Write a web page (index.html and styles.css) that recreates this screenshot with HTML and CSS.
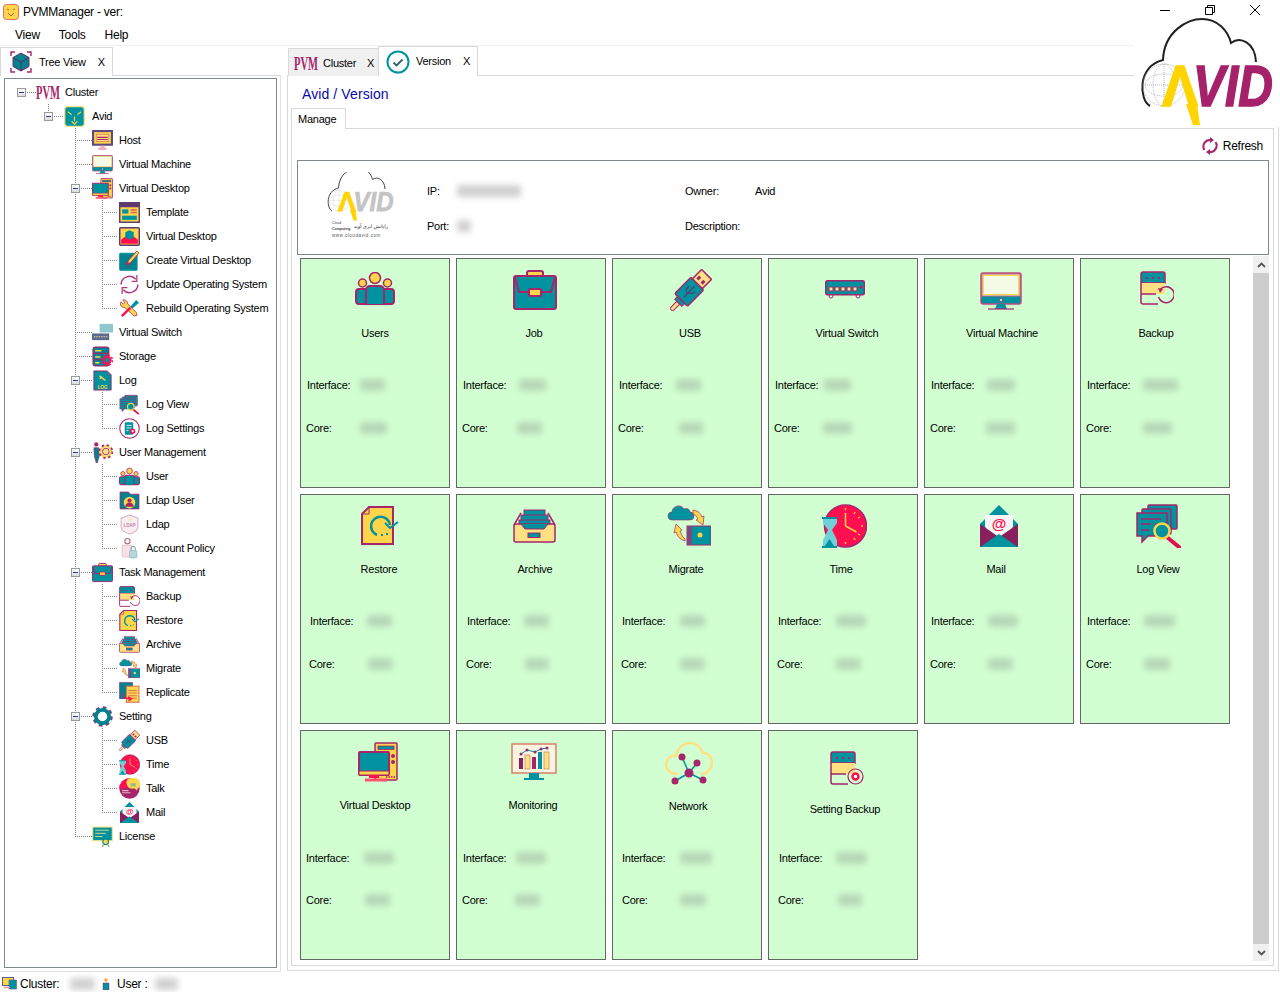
FILE: index.html
```html
<!DOCTYPE html>
<html lang="en">
<head>
<meta charset="utf-8">
<title>PVMManager</title>
<link rel="stylesheet" href="styles.css">
</head>
<body>
<svg class="defs" width="0" height="0" aria-hidden="true">
<defs>
<symbol id="i-pvm" viewBox="0 0 24 14"><text x="0" y="13.5" class="pvmt" font-size="18" textLength="24" lengthAdjust="spacingAndGlyphs">PVM</text></symbol>
<symbol id="i-app" viewBox="0 0 16 16"><rect x=".5" y=".5" width="15" height="15" rx="3" fill="#ffd54a" stroke="#e0705a"/><path d="M4 5l2 1M12 5l-2 1M5 9l3 3 3-3" stroke="#c0504a" fill="none"/></symbol>
<symbol id="i-cube" viewBox="0 0 22 22"><path d="M1 5V1h4M17 1h4v4M21 17v4h-4M5 21H1v-4" fill="none" stroke="#a5266b" stroke-width="1.4"/><path d="M11 2l8 4.500v9L11 20l-8-4.500v-9z" fill="#00838f" stroke="#7a2a6b"/><path d="M3 6.500l8 4.500 8-4.500M11 11v9" fill="none" stroke="#5d2a68"/></symbol>
<symbol id="i-cat" viewBox="0 0 22 22"><rect x=".7" y=".7" width="20.600" height="20.600" rx="3" fill="#00929e" stroke="#ffe082" stroke-width="1.400"/><path d="M4 6l4 3M18 6l-4 3M8 16l3 3 3-3M11 11v5" stroke="#ffd54a" stroke-width="1.200" fill="none"/></symbol>
<symbol id="i-host" viewBox="0 0 20 20"><rect x="1" y="1" width="18" height="13" fill="#ffd54a" stroke="#5d4a80" stroke-width="2"/><rect x="4" y="4" width="12" height="7" fill="#ffe082" stroke="#d9705a" stroke-width=".7"/><path d="M5 7h10M5 9h10" stroke="#a5266b" stroke-width="1"/><path d="M8 15h4v2h2v2H6v-2h2z" fill="#f0b0c0"/></symbol>
<symbol id="i-users" viewBox="0 0 40 33"><rect x="1" y="17" width="38" height="15" rx="3" fill="#00929e" stroke="#a5266b" stroke-width="2"/><path d="M11 32V18a4 4 0 0 1 4-4h10a4 4 0 0 1 4 4v14" fill="#00929e" stroke="#a5266b" stroke-width="2"/><circle cx="20" cy="6" r="5.500" fill="#ffd54a" stroke="#a5266b" stroke-width="1.500"/><circle cx="7.500" cy="11" r="4" fill="#ffd54a" stroke="#a5266b" stroke-width="1.500"/><circle cx="32.500" cy="11" r="4" fill="#ffd54a" stroke="#a5266b" stroke-width="1.500"/></symbol>
<symbol id="i-job" viewBox="0 0 44 40"><rect x="14" y="1" width="16" height="6" rx="2" fill="#ffd54a" stroke="#a5266b" stroke-width="2"/><rect x="1" y="6" width="42" height="33" rx="2" fill="#00929e" stroke="#a5266b" stroke-width="2"/><path d="M2 7l4 15h32l4-15" fill="none" stroke="#a5266b" stroke-width="2"/><rect x="16" y="19" width="12" height="7" rx="1" fill="#ffd54a" stroke="#a5266b" stroke-width="2"/></symbol>
<symbol id="i-usb" viewBox="0 0 42 42"><g transform="rotate(-45 21 21)"><rect x="-7" y="19" width="10" height="4" fill="#ffe082" stroke="#a5266b"/><rect x="3" y="16" width="4" height="10" fill="#00929e" stroke="#a5266b"/><rect x="7" y="12" width="23" height="18" rx="1.500" fill="#00929e" stroke="#a5266b" stroke-width="1.500"/><rect x="30" y="14" width="13" height="14" fill="#ffe082" stroke="#a5266b" stroke-width="1.500"/><rect x="33" y="16.500" width="4" height="3" fill="#a5266b"/><rect x="33" y="22.500" width="4" height="3" fill="#a5266b"/><path d="M11 21h15M15 21l3-4h4M17 21l3 4h3" fill="none" stroke="#6d2a6b"/></g></symbol>
<symbol id="i-vswitch" viewBox="0 0 40 19"><circle cx="6" cy="16" r="2" fill="#fff" stroke="#a5266b"/><circle cx="33" cy="16" r="2" fill="#fff" stroke="#a5266b"/><rect x=".7" y=".7" width="38.600" height="14" rx="1.500" fill="#00929e" stroke="#a5266b" stroke-width="1.400"/><path d="M4 7h4v4H4zM10 7h4v4h-4zM16 7h4v4h-4zM22 7h4v4h-4zM28 7h4v4h-4z" fill="#ffe082" stroke="#a5266b"/><circle cx="36" cy="7" r="1.500" fill="#e01050"/></symbol>
<symbol id="i-vm" viewBox="0 0 42 38"><rect x="1" y="1" width="40" height="31" rx="2" fill="#00929e" stroke="#c04a80" stroke-width="1.500"/><rect x="2" y="2" width="38" height="22" fill="#d1ffd1" stroke="#d9607a"/><rect x="3.500" y="3.500" width="35" height="19" fill="#f3fbe6" stroke="#ffd54a"/><circle cx="21" cy="28" r="1.500" fill="#f3f8df" stroke="#a5266b" stroke-width=".7"/><path d="M17 32h8l2 5H15z" fill="#00929e"/><path d="M8 37h26" stroke="#a5266b" stroke-width="1.200"/></symbol>
<symbol id="i-backup" viewBox="0 0 34 34"><path d="M3 1h20a2 2 0 0 1 2 2v9H1V3a2 2 0 0 1 2-2z" fill="#00929e" stroke="#a5266b" stroke-width="1.500"/><path d="M1 12h24v11H1z" fill="#ffe082"/><path d="M1 12v19a2 2 0 0 0 2 2h15M1 23h15" fill="none" stroke="#a5266b" stroke-width="1.500"/><path d="M6 7h2M12 7h2M18 7h2" stroke="#a5266b" stroke-width="2"/><path d="M20.500 18a8 8 0 1 1-2 8" fill="none" stroke="#a5266b" stroke-width="1.500"/><path d="M18 17l5 1-3 4z" fill="#a5266b"/></symbol>
<symbol id="i-restore" viewBox="0 0 38 39"><path d="M8 1h24v37H1V8z" fill="#ffd54a" stroke="#a5266b" stroke-width="2"/><path d="M1 8h7V1" fill="none" stroke="#a5266b" stroke-width="1"/><path d="M29 19a9.500 9.500 0 1 0-13 10" fill="none" stroke="#00929e" stroke-width="2.500"/><path d="M24 17l5 5 8-6" fill="none" stroke="#00929e" stroke-width="2"/><path d="M20 29h2M25 28h2" stroke="#00929e" stroke-width="2"/></symbol>
<symbol id="i-archive" viewBox="0 0 43 34"><rect x="11" y="1" width="21" height="6" fill="#00929e" stroke="#a5266b"/><rect x="8" y="6" width="27" height="6" fill="#00929e" stroke="#a5266b"/><rect x="6" y="11" width="31" height="8" fill="#00929e" stroke="#a5266b"/><path d="M1 16L8 4M42 16L35 4" stroke="#a5266b" stroke-width="1.500"/><path d="M3 15h37a2 2 0 0 1 2 2v14a2 2 0 0 1-2 2H3a2 2 0 0 1-2-2V17a2 2 0 0 1 2-2z" fill="#ffe082" stroke="#a5266b" stroke-width="1.500"/><path d="M8 15l4 5h19l4-5" fill="#00929e" stroke="#a5266b"/><rect x="15" y="24" width="12" height="4.500" fill="#00929e" stroke="#a5266b"/></symbol>
<symbol id="i-migrate" viewBox="0 0 44 41"><path d="M5 15a4 4 0 0 1 0-8 6.500 6.500 0 0 1 12-3 4 4 0 0 1 6 3 4 4 0 0 1 0 8z" fill="#00929e" stroke="#a5266b" stroke-width=".6"/><path d="M26 5q7 1 9 7l2-1-1 9-7-5 2-1q-1-4-5-5z" fill="#ffd54a" stroke="#a5266b" stroke-width=".7"/><path d="M18 36q-7-2-9-9l-2 1 2-9 6 6-2 1q2 6 5 8z" fill="#ffd54a" stroke="#a5266b" stroke-width=".7"/><rect x="20" y="21" width="24" height="19" fill="#00929e" stroke="#a5266b" stroke-width="1"/><rect x="20" y="21" width="5" height="19" fill="#7a4a80"/><circle cx="33" cy="30" r="2.500" fill="#ffd54a"/></symbol>
<symbol id="i-time" viewBox="0 0 45 44"><circle cx="23.500" cy="22" r="21" fill="#ff0f50" stroke="#a5266b" stroke-width="1.500"/><path d="M23.500 22V9M23.500 22l11 6" stroke="#ffd54a" stroke-width="1.500"/><path d="M23.500 4v2M23.500 38v2M41 22h-2M33 8l-1 2M38 13l-2 1M38 31l-2-1M33 36l-1-2" stroke="#ffd54a" stroke-width="1.300"/><path d="M1 14h14v5l-5 7 5 10v7H1v-7l5-10-5-7z" fill="#70d0d8"/><path d="M0 14h15M0 43h15" stroke="#00929e" stroke-width="2"/><path d="M3 42l4.500-7 4.500 7z" fill="#00929e"/></symbol>
<symbol id="i-mail" viewBox="0 0 38 42"><path d="M19 0l19 19v4H0v-4z" fill="#00929e"/><path d="M0 19l19 13 19-13v23H0z" fill="#8a1f5e"/><path d="M5 10h28v12L19 32 5 22z" fill="#f5f5f5"/><path d="M0 42l19-13 19 13z" fill="#00929e"/><text x="19" y="24" class="at" font-size="15">@</text></symbol>
<symbol id="i-logview" viewBox="0 0 48 44"><rect x="13" y="1" width="29" height="24" rx="1" fill="#00929e" stroke="#a5266b" stroke-width="1.500"/><rect x="7" y="5" width="29" height="25" rx="1" fill="#00929e" stroke="#a5266b" stroke-width="1.500"/><path d="M2 9h30v23H13l-6 6v-6H2z" fill="#00929e" stroke="#a5266b" stroke-width="1.500"/><path d="M6 15h20M6 20h10M6 26h8M20 20h6" stroke="#a5266b" stroke-width="1.500"/><path d="M33 34l11 9" stroke="#e01050" stroke-width="4" stroke-linecap="round"/><circle cx="27" cy="27" r="7.500" fill="#00929e" stroke="#ffd54a" stroke-width="2.500"/></symbol>
<symbol id="i-vdesk" viewBox="0 0 40 40"><rect x="17" y="1" width="22" height="37" rx="1" fill="#ffd54a" stroke="#a5266b" stroke-width="1.500"/><rect x="20" y="4" width="16" height="3.500" fill="#00929e" stroke="#a5266b" stroke-width=".8"/><circle cx="35" cy="14" r="2" fill="#a5266b"/><circle cx="35" cy="20" r="2" fill="#a5266b"/><rect x="1" y="10" width="30" height="23" rx="1" fill="#00929e" stroke="#a5266b" stroke-width="2"/><path d="M1 29h30v4H1z" fill="#ffd54a" stroke="#a5266b"/><rect x="11" y="33" width="10" height="3" fill="#ff0f50"/><path d="M7 38h22" stroke="#ff5070" stroke-width="3"/><path d="M28 35h9" stroke="#a5266b" stroke-width="1.500" stroke-dasharray="1.500 1"/></symbol>
<symbol id="i-monitor" viewBox="0 0 46 37"><rect x="1" y="1" width="44" height="29" fill="#f7f5df" stroke="#d9806a" stroke-width="1.500"/><rect x="8" y="15" width="4" height="11" fill="#8a1f5e"/><rect x="14" y="12" width="5" height="14" fill="#ffe082" stroke="#c07060" stroke-width=".6"/><rect x="21" y="14" width="4" height="12" fill="#a5266b"/><rect x="27" y="9" width="4" height="17" fill="#00929e"/><rect x="33" y="9" width="5" height="17" fill="#ffe082" stroke="#c07060" stroke-width=".6"/><path d="M10 11l6-4 8 2 6-3 6-1" fill="none" stroke="#00929e"/><circle cx="10" cy="11" r="1.500" fill="#a5266b"/><circle cx="16" cy="7" r="1.500" fill="#a5266b"/><circle cx="24" cy="9" r="1.500" fill="#a5266b"/><circle cx="30" cy="6" r="1.500" fill="#a5266b"/><circle cx="36" cy="5" r="1.500" fill="#a5266b"/><path d="M18 30h10v5H18z" fill="#00929e"/><path d="M13 36h20" stroke="#00929e" stroke-width="2"/></symbol>
<symbol id="i-network" viewBox="0 0 48 45"><path d="M13 33C4 33-1 27 2 20c1-4 5-6 9-5 1-7 7-13 14-13 6 0 11 4 13 10 6 0 9 5 9 10 0 6-5 11-11 11" fill="none" stroke="#ffe082" stroke-width="2.500"/><path d="M17 16l7 16M32 22l-8 10M10 40l14-8M38 39l-14-7" stroke="#00929e" stroke-width="1.500"/><g fill="#a5266b"><circle cx="17" cy="16" r="3.500"/><circle cx="32" cy="22" r="3.500"/><circle cx="24" cy="32" r="4.500"/><circle cx="10" cy="40" r="3.500"/><circle cx="38" cy="39" r="3.500"/></g></symbol>
<symbol id="i-setbackup" viewBox="0 0 34 34"><path d="M3 1h20a2 2 0 0 1 2 2v9H1V3a2 2 0 0 1 2-2z" fill="#00929e" stroke="#a5266b" stroke-width="1.500"/><path d="M1 12h24v11H1z" fill="#ffe082"/><path d="M1 12v19a2 2 0 0 0 2 2h15M1 23h15" fill="none" stroke="#a5266b" stroke-width="1.500"/><path d="M6 7h2M12 7h2M18 7h2" stroke="#a5266b" stroke-width="2"/><circle cx="25.500" cy="25.500" r="7.500" fill="none" stroke="#a5266b" stroke-width="1.200"/><circle cx="25.500" cy="25.500" r="3" fill="#fff" stroke="#ff0f50" stroke-width="2.500"/></symbol>
<symbol id="i-template" viewBox="0 0 20 20"><rect x=".7" y=".7" width="18.600" height="18.600" fill="#ffd54a" stroke="#5d3a70" stroke-width="1.400"/><rect x="1" y="1" width="18" height="4" fill="#5d3a70"/><rect x="3" y="7" width="6" height="4" fill="#00929e"/><path d="M11 7.500h6M11 10h6" stroke="#d9705a" stroke-width="1.500"/><rect x="3" y="13" width="14" height="4" fill="#00929e"/></symbol>
<symbol id="i-vdtile" viewBox="0 0 20 18"><rect x=".7" y=".7" width="18.600" height="16.600" rx="1" fill="#ffd54a" stroke="#5d3a70" stroke-width="1.400"/><path d="M2 16v-4l4-3h8l4 3v4z" fill="#ff0f50"/><path d="M10 3l4 2v5l-4 2-4-2V5z" fill="#00929e"/></symbol>
<symbol id="i-create" viewBox="0 0 20 20"><rect x=".7" y="3" width="16.500" height="16.300" rx="1" fill="#00838f" stroke="#00929e"/><path d="M6 13h5M8.500 10.500v5" stroke="#e01050"/><path d="M9 10l8-9 2 2-8 9-3 1z" fill="#ffd54a" stroke="#a5266b" stroke-width=".8"/></symbol>
<symbol id="i-update" viewBox="0 0 20 20"><path d="M2 10a8 8 0 0 1 14-5M18 10a8 8 0 0 1-14 5" fill="none" stroke="#b03a7a" stroke-width="1.400"/><path d="M17 1v6h-5M3 19v-6h5" fill="none" stroke="#b03a7a" stroke-width="1.200"/></symbol>
<symbol id="i-rebuild" viewBox="0 0 22 22"><path d="M4 2l2 3-1.500 1.500L2 4a4 4 0 0 0 4 6l10 9 3-1-1-3-9-9a4 4 0 0 0-5-4z" fill="#ffd54a" stroke="#a5266b" stroke-width=".8"/><path d="M3 19l9-9" stroke="#ff0f50" stroke-width="2.500"/><path d="M12 9l6-7 3 3-7 6z" fill="#00929e"/></symbol>
<symbol id="i-vsw-tree" viewBox="0 0 22 18"><rect x="8" y="0" width="14" height="9" fill="#8ec8cc"/><rect x="0" y="10" width="18" height="7" fill="#5d6a90"/><path d="M2 13.500h14" stroke="#ffe082" stroke-dasharray="1.500 1"/></symbol>
<symbol id="i-storage" viewBox="0 0 20 20"><rect x="1" y="1" width="15" height="18" rx="2" fill="#00838f" stroke="#a5266b" stroke-width="1.200"/><path d="M1 7h15M1 13h15" stroke="#a5266b"/><path d="M3 4.500h6M3 10.500h5M3 16h4" stroke="#ffd54a" stroke-width="1.400"/><circle cx="14.500" cy="13.500" r="3.200" fill="#00929e" stroke="#ff0f50" stroke-width="2"/><circle cx="14.500" cy="13.500" r="5" fill="none" stroke="#ff0f50" stroke-width="1.400" stroke-dasharray="2 1.900"/></symbol>
<symbol id="i-log" viewBox="0 0 20 22"><path d="M1 1h14l4 4v16H1z" fill="#00929e" stroke="#8a2a6b"/><path d="M15 1v4h4" fill="#8a5a90"/><path d="M8 7l5 4M7 6l2 2-2 1" stroke="#ffd54a" stroke-width="1.600" fill="none"/><text x="10" y="19.500" class="tiny" font-size="5">LOG</text></symbol>
<symbol id="i-logset" viewBox="0 0 20 20"><circle cx="10" cy="10" r="9.300" fill="#fff" stroke="#a5266b"/><rect x="5.500" y="4" width="8" height="12" rx="1" fill="#00929e"/><path d="M7 7h5M7 9.500h5M7 12h2" stroke="#fff" stroke-width=".8"/><circle cx="13" cy="12.500" r="2.500" fill="#ff0f50"/><circle cx="13" cy="12.500" r="1" fill="#fff"/></symbol>
<symbol id="i-usermg" viewBox="0 0 22 22"><circle cx="4.500" cy="2.500" r="2.200" fill="#a5266b"/><path d="M2 6h5l.5 9-2 7h-1l-2-7z" fill="#00838f" stroke="#a5266b" stroke-width=".7"/><circle cx="14.500" cy="10" r="3.500" fill="#ffe082" stroke="#a5266b" stroke-width="1"/><circle cx="14.500" cy="10" r="5.500" fill="none" stroke="#ffd54a" stroke-width="2"/><circle cx="14.500" cy="10" r="6.800" fill="none" stroke="#a5266b" stroke-width="1.800" stroke-dasharray="2.500 2.850"/></symbol>
<symbol id="i-ldapu" viewBox="0 0 20 18"><path d="M1 17V1h8l2 2h8v14z" fill="#00838f" stroke="#a5266b" stroke-width=".8"/><circle cx="10" cy="11" r="5.500" fill="#ffd54a"/><circle cx="10" cy="9" r="2" fill="#a5266b"/><path d="M6 15a4 4 0 0 1 8 0z" fill="#a5266b"/></symbol>
<symbol id="i-ldap" viewBox="0 0 20 20"><path d="M10 1l8 3v8c0 4-4 6-8 7-4-1-8-3-8-7V4z" fill="#fbeef2" stroke="#d8b0c4"/><path d="M10 5l3-1-4 3z" fill="#ffe082"/><text x="10" y="12.500" class="tinyp" font-size="4.500">LDAP</text></symbol>
<symbol id="i-account" viewBox="0 0 18 20"><circle cx="7" cy="3" r="2.500" fill="#fff" stroke="#b0607a"/><path d="M2 7h9v11H2z" fill="#f8e0e4" stroke="#dab0c0" stroke-width=".6"/><rect x="9" y="12" width="7" height="7" rx="1" fill="#b7d6d8" stroke="#8ab0b8" stroke-width=".6"/><path d="M10.500 12v-2a2 2 0 0 1 4 0v2" fill="none" stroke="#80a8b0"/></symbol>
<symbol id="i-replicate" viewBox="0 0 20 20"><rect x=".7" y=".7" width="12" height="15" fill="#00838f" stroke="#5d5a90"/><rect x="7" y="4" width="12" height="15.300" fill="#ffd54a" stroke="#d9705a"/><path d="M9 8h8M9 10.500h8M9 13h8M9 15.500h8" stroke="#d9705a"/><path d="M3 11c1 4 4 5 7 5l-1.500-2L12 16l-3 2" fill="none" stroke="#ff0f50" stroke-width="1.200"/></symbol>
<symbol id="i-gear" viewBox="0 0 22 22"><circle cx="11" cy="11" r="7" fill="none" stroke="#00838f" stroke-width="4"/><circle cx="11" cy="11" r="9" fill="none" stroke="#a5266b" stroke-width="3.500" stroke-dasharray="3.500 3.570"/><circle cx="11" cy="11" r="8.500" fill="none" stroke="#00838f" stroke-width="2.500" stroke-dasharray="3.500 3.170"/></symbol>
<symbol id="i-talk" viewBox="0 0 20 20"><circle cx="10" cy="10" r="9.700" fill="#a5266b"/><path d="M10 .3A9.700 9.700 0 0 0 .3 10c3 1 7 0 9-3z" fill="#ff0f50"/><path d="M7 3a5 5 0 0 1 5-3h3a5 5 0 0 1 5 5v3l-2 2-1 2-2-2h-3c-3 0-5-3-5-7z" fill="#ffd54a"/><path d="M11 5h5v3h-5z" fill="#8bbf90"/><path d="M3 12h6M3 14h8" stroke="#e6b4c0"/></symbol>
<symbol id="i-license" viewBox="0 0 20 20"><rect x=".7" y="1" width="18.600" height="13" fill="#00929e" stroke="#ffe082"/><path d="M3 4h13M3 7h10M3 10h7" stroke="#ffe082" stroke-width=".8"/><circle cx="13" cy="15" r="2.700" fill="#ffd54a" stroke="#00838f"/><path d="M11 17l-1 3M15 17l1 3" stroke="#8bbf90" stroke-width="1.400"/></symbol>
<symbol id="i-check" viewBox="0 0 24 24"><circle cx="12" cy="12" r="10.500" fill="#fff" stroke="#00929e" stroke-width="2"/><path d="M7.500 12.500l3 3 6-6" fill="none" stroke="#2a6070" stroke-width="1.800"/></symbol>
<symbol id="i-refresh" viewBox="0 0 16 18"><path d="M2.500 13A6.500 6.500 0 0 1 9 3M13.500 5A6.500 6.500 0 0 1 7 15" fill="none" stroke="#a5266b" stroke-width="2"/><path d="M8 0l4 3-4 3zM8 12l-4 3 4 3z" fill="#a5266b"/></symbol>
<symbol id="i-statmon" viewBox="0 0 15 13"><rect x=".5" y=".5" width="11" height="8" fill="#ffd54a" stroke="#5d5a90"/><rect x="7" y="3" width="7.500" height="9" fill="#00929e" stroke="#5d5a90" stroke-width=".6"/><path d="M2 10.500h6" stroke="#e88aa8" stroke-width="1.500"/></symbol>
<symbol id="i-statuser" viewBox="0 0 8 12"><circle cx="4" cy="2" r="1.800" fill="#ffa040"/><path d="M1 5h6v7H1z" fill="#00929e" stroke="#a5266b" stroke-width=".5"/></symbol>
<symbol id="i-avid" viewBox="0 0 140 112">
<path d="M10 90C-1 84-3 50 23 44 24 15 48 3 62 3c16 0 26 12 29 24 9-7 24-1 25 19" fill="none" stroke="var(--cloud,#222)" stroke-width="2"/>
<g fill="none" stroke="#999" stroke-width=".7" stroke-dasharray="1 1"><circle cx="24" cy="69" r="21"/><ellipse cx="24" cy="69" rx="11" ry="21"/><ellipse cx="24" cy="69" rx="19" ry="11"/><path d="M3 69h42M24 48v42"/></g>
<text x="22" y="90" class="lam" font-size="57" textLength="36" lengthAdjust="spacingAndGlyphs">&#923;</text>
<path d="M46 88h11l3 21h-7z" fill="#ffd400"/>
<text x="53" y="90" class="vid" font-size="57" textLength="80" lengthAdjust="spacingAndGlyphs">VID</text>
</symbol>
</defs>
</svg>

<div class="app">
  <header class="titlebar">
    <svg class="appicon" width="16" height="16"><use href="#i-app"/></svg>
    <span class="apptitle">PVMManager - ver:</span>
    <div class="winctl">
      <span class="wbtn"><svg width="12" height="12" viewBox="0 0 12 12"><path d="M1 6.500h10" stroke="#000"/></svg></span>
      <span class="wbtn"><svg width="12" height="12" viewBox="0 0 12 12"><path d="M1.500 3.500h7v7h-7zM3.500 3.500v-2h7v7h-2" fill="none" stroke="#000"/></svg></span>
      <span class="wbtn"><svg width="12" height="12" viewBox="0 0 12 12"><path d="M1 1l10 10M11 1L1 11" stroke="#000"/></svg></span>
    </div>
  </header>
  <nav class="menubar"><span>View</span><span>Tools</span><span>Help</span></nav>

  <main class="workspace">
    <section class="left">
      <div class="ltabs">
        <div class="tab tab-tree"><svg width="22" height="22"><use href="#i-cube"/></svg><span class="tt">Tree View</span><span class="tx">X</span></div>
      </div>
      <div class="leftbody">
        <div class="tree">
          <svg class="guides" viewBox="5 79 272 888" width="272" height="888">
            <path d="M27 92.500h9M48.500 104v12M54 116.500h10M75.500 128v708M102.500 200v108M102.500 392v36M102.500 464v84M102.500 584v108M102.500 728v84M75 140.500h17M75 164.500h17M81 188.500h11M75 332.500h17M75 356.500h17M81 380.500h11M81 452.500h11M81 572.500h11M81 716.500h11M75 836.500h17M102 212.500h16M102 236.500h16M102 260.500h16M102 284.500h16M102 308.500h16M102 404.500h16M102 428.500h16M102 476.500h16M102 500.500h16M102 524.500h16M102 548.500h16M102 596.500h16M102 620.500h16M102 644.500h16M102 668.500h16M102 692.500h16M102 740.500h16M102 764.500h16M102 788.500h16M102 812.500h16" fill="none" stroke="#808080" stroke-dasharray="1 1"/>
          </svg>
          <div class="row l0"><i class="exp"></i><svg class="ti wide" width="24" height="14"><use href="#i-pvm"/></svg>Cluster</div>
          <div class="row l1"><i class="exp"></i><svg class="ti"><use href="#i-cat"/></svg>Avid</div>
          <div class="row l2"><svg class="ti"><use href="#i-host"/></svg>Host</div>
          <div class="row l2"><svg class="ti"><use href="#i-vm"/></svg>Virtual Machine</div>
          <div class="row l2"><i class="exp"></i><svg class="ti"><use href="#i-vdesk"/></svg>Virtual Desktop</div>
          <div class="row l3"><svg class="ti"><use href="#i-template"/></svg>Template</div>
          <div class="row l3"><svg class="ti"><use href="#i-vdtile"/></svg>Virtual Desktop</div>
          <div class="row l3"><svg class="ti"><use href="#i-create"/></svg>Create Virtual Desktop</div>
          <div class="row l3"><svg class="ti"><use href="#i-update"/></svg>Update Operating System</div>
          <div class="row l3"><svg class="ti"><use href="#i-rebuild"/></svg>Rebuild Operating System</div>
          <div class="row l2"><svg class="ti"><use href="#i-vsw-tree"/></svg>Virtual Switch</div>
          <div class="row l2"><svg class="ti"><use href="#i-storage"/></svg>Storage</div>
          <div class="row l2"><i class="exp"></i><svg class="ti"><use href="#i-log"/></svg>Log</div>
          <div class="row l3"><svg class="ti"><use href="#i-logview"/></svg>Log View</div>
          <div class="row l3"><svg class="ti"><use href="#i-logset"/></svg>Log Settings</div>
          <div class="row l2"><i class="exp"></i><svg class="ti"><use href="#i-usermg"/></svg>User Management</div>
          <div class="row l3"><svg class="ti"><use href="#i-users"/></svg>User</div>
          <div class="row l3"><svg class="ti"><use href="#i-ldapu"/></svg>Ldap User</div>
          <div class="row l3"><svg class="ti"><use href="#i-ldap"/></svg>Ldap</div>
          <div class="row l3"><svg class="ti"><use href="#i-account"/></svg>Account Policy</div>
          <div class="row l2"><i class="exp"></i><svg class="ti"><use href="#i-job"/></svg>Task Management</div>
          <div class="row l3"><svg class="ti"><use href="#i-backup"/></svg>Backup</div>
          <div class="row l3"><svg class="ti"><use href="#i-restore"/></svg>Restore</div>
          <div class="row l3"><svg class="ti"><use href="#i-archive"/></svg>Archive</div>
          <div class="row l3"><svg class="ti"><use href="#i-migrate"/></svg>Migrate</div>
          <div class="row l3"><svg class="ti"><use href="#i-replicate"/></svg>Replicate</div>
          <div class="row l2"><i class="exp"></i><svg class="ti"><use href="#i-gear"/></svg>Setting</div>
          <div class="row l3"><svg class="ti"><use href="#i-usb"/></svg>USB</div>
          <div class="row l3"><svg class="ti"><use href="#i-time"/></svg>Time</div>
          <div class="row l3"><svg class="ti"><use href="#i-talk"/></svg>Talk</div>
          <div class="row l3"><svg class="ti"><use href="#i-mail"/></svg>Mail</div>
          <div class="row l2"><svg class="ti"><use href="#i-license"/></svg>License</div>
        </div>
      </div>
    </section>

    <section class="right">
      <div class="rtabs">
        <div class="tab tab-cluster"><svg width="24" height="14"><use href="#i-pvm"/></svg><span class="tt">Cluster</span><span class="tx">X</span></div>
        <div class="tab tab-version"><svg width="24" height="24"><use href="#i-check"/></svg><span class="tt">Version</span><span class="tx">X</span></div>
      </div>
      <div class="panel">
        <h1 class="crumb">Avid / Version</h1>
        <div class="subtab">Manage</div>
        <div class="page">
          <div class="toolbar"><svg width="16" height="18"><use href="#i-refresh"/></svg><span>Refresh</span></div>
          <div class="info">
            <svg class="smalllogo" width="70" height="68" viewBox="0 0 70 68">
              <use href="#i-avid" class="greylogo" x="0" y="-9" width="70" height="62" preserveAspectRatio="none"/>
              <text x="5" y="52" class="lg">Cloud</text>
              <text x="5" y="58" class="lg lgb">Computing</text>
              <text x="61" y="56" class="lgf">&#1585;&#1575;&#1740;&#1575;&#1606;&#1588; &#1575;&#1576;&#1585;&#1740; &#1570;&#1608;&#1740;&#1583;</text>
              <text x="5" y="65" class="lgw">www.cloudavid.com</text>
            </svg>
            <div class="field"><span class="fk k-ip">IP:</span><span class="v v-ip"></span></div>
            <div class="field f-owner"><span class="fk k-owner">Owner:</span><span>Avid</span></div>
            <div class="field"><span class="fk k-ip">Port:</span><span class="v v-port"></span></div>
            <div class="field"><span class="fk">Description:</span></div>
          </div>
          <div class="scrollarea">
            <div class="cards">
              <article class="card c-users"><div class="ci"><svg width="40" height="33"><use href="#i-users"/></svg></div><div class="cl">Users</div><div class="cr cr1"><span class="k">Interface:</span><span class="v"></span></div><div class="cr cr2"><span class="k">Core:</span><span class="v"></span></div></article>
              <article class="card c-job"><div class="ci"><svg width="44" height="40"><use href="#i-job"/></svg></div><div class="cl">Job</div><div class="cr cr1"><span class="k">Interface:</span><span class="v"></span></div><div class="cr cr2"><span class="k">Core:</span><span class="v"></span></div></article>
              <article class="card c-usb"><div class="ci"><svg width="42" height="42"><use href="#i-usb"/></svg></div><div class="cl">USB</div><div class="cr cr1"><span class="k">Interface:</span><span class="v"></span></div><div class="cr cr2"><span class="k">Core:</span><span class="v"></span></div></article>
              <article class="card c-vsw"><div class="ci"><svg width="40" height="19"><use href="#i-vswitch"/></svg></div><div class="cl">Virtual Switch</div><div class="cr cr1"><span class="k">Interface:</span><span class="v"></span></div><div class="cr cr2"><span class="k">Core:</span><span class="v"></span></div></article>
              <article class="card c-vm"><div class="ci"><svg width="42" height="38"><use href="#i-vm"/></svg></div><div class="cl">Virtual Machine</div><div class="cr cr1"><span class="k">Interface:</span><span class="v"></span></div><div class="cr cr2"><span class="k">Core:</span><span class="v"></span></div></article>
              <article class="card c-bak"><div class="ci"><svg width="34" height="34"><use href="#i-backup"/></svg></div><div class="cl">Backup</div><div class="cr cr1"><span class="k">Interface:</span><span class="v"></span></div><div class="cr cr2"><span class="k">Core:</span><span class="v"></span></div></article>
              <article class="card c-res"><div class="ci"><svg width="38" height="39"><use href="#i-restore"/></svg></div><div class="cl">Restore</div><div class="cr cr1"><span class="k">Interface:</span><span class="v"></span></div><div class="cr cr2"><span class="k">Core:</span><span class="v"></span></div></article>
              <article class="card c-arc"><div class="ci"><svg width="43" height="34"><use href="#i-archive"/></svg></div><div class="cl">Archive</div><div class="cr cr1"><span class="k">Interface:</span><span class="v"></span></div><div class="cr cr2"><span class="k">Core:</span><span class="v"></span></div></article>
              <article class="card c-mig"><div class="ci"><svg width="44" height="41"><use href="#i-migrate"/></svg></div><div class="cl">Migrate</div><div class="cr cr1"><span class="k">Interface:</span><span class="v"></span></div><div class="cr cr2"><span class="k">Core:</span><span class="v"></span></div></article>
              <article class="card c-tim"><div class="ci"><svg width="45" height="44"><use href="#i-time"/></svg></div><div class="cl">Time</div><div class="cr cr1"><span class="k">Interface:</span><span class="v"></span></div><div class="cr cr2"><span class="k">Core:</span><span class="v"></span></div></article>
              <article class="card c-mai"><div class="ci"><svg width="38" height="42"><use href="#i-mail"/></svg></div><div class="cl">Mail</div><div class="cr cr1"><span class="k">Interface:</span><span class="v"></span></div><div class="cr cr2"><span class="k">Core:</span><span class="v"></span></div></article>
              <article class="card c-lv"><div class="ci"><svg width="48" height="44"><use href="#i-logview"/></svg></div><div class="cl">Log View</div><div class="cr cr1"><span class="k">Interface:</span><span class="v"></span></div><div class="cr cr2"><span class="k">Core:</span><span class="v"></span></div></article>
              <article class="card low c-vd"><div class="ci"><svg width="40" height="40"><use href="#i-vdesk"/></svg></div><div class="cl">Virtual Desktop</div><div class="cr cr1"><span class="k">Interface:</span><span class="v"></span></div><div class="cr cr2"><span class="k">Core:</span><span class="v"></span></div></article>
              <article class="card low c-mon"><div class="ci"><svg width="46" height="37"><use href="#i-monitor"/></svg></div><div class="cl">Monitoring</div><div class="cr cr1"><span class="k">Interface:</span><span class="v"></span></div><div class="cr cr2"><span class="k">Core:</span><span class="v"></span></div></article>
              <article class="card low c-net"><div class="ci"><svg width="48" height="45"><use href="#i-network"/></svg></div><div class="cl">Network</div><div class="cr cr1"><span class="k">Interface:</span><span class="v"></span></div><div class="cr cr2"><span class="k">Core:</span><span class="v"></span></div></article>
              <article class="card low c-sb"><div class="ci"><svg width="34" height="34"><use href="#i-setbackup"/></svg></div><div class="cl">Setting Backup</div><div class="cr cr1"><span class="k">Interface:</span><span class="v"></span></div><div class="cr cr2"><span class="k">Core:</span><span class="v"></span></div></article>
            </div>
            <div class="scrollbar">
              <span class="sa"><svg width="9" height="6" viewBox="0 0 9 6"><path d="M1 5l3.500-3.500L8 5" fill="none" stroke="#555" stroke-width="1.800"/></svg></span>
              <span class="thumb"></span>
              <span class="sa"><svg width="9" height="6" viewBox="0 0 9 6"><path d="M1 1l3.500 3.500L8 1" fill="none" stroke="#555" stroke-width="1.800"/></svg></span>
            </div>
          </div>
        </div>
      </div>
    </section>
  </main>

  <footer class="status">
    <svg width="15" height="13"><use href="#i-statmon"/></svg>
    <span class="st1">Cluster:</span><span class="v v-s1"></span>
    <svg class="su" width="8" height="12"><use href="#i-statuser"/></svg>
    <span class="st2">User :</span><span class="v v-s2"></span>
  </footer>

  <svg class="biglogo" viewBox="1134 17 146 110" width="146" height="110"><use href="#i-avid" x="1140" y="16" width="140" height="112"/></svg>
</div>
</body>
</html>
```

FILE: styles.css
```css
* { box-sizing: border-box; }
html, body { margin: 0; padding: 0; background: #fff; }
body { font: 11px "Liberation Sans", Arial, sans-serif; color: #000; letter-spacing: -.25px; }
.defs { position: absolute; }

.pvmt { font-family: "Liberation Serif", serif; font-weight: 700; fill: #a5266b; letter-spacing: 0; }
.at { font-family: "Liberation Sans", sans-serif; font-weight: 700; fill: #ff0f50; text-anchor: middle; }
.tiny { font-family: "Liberation Sans", sans-serif; font-weight: 700; fill: #ffd54a; text-anchor: middle; }
.tinyp { font-family: "Liberation Sans", sans-serif; font-weight: 700; fill: #c090a8; text-anchor: middle; }
.lam { font-family: "Liberation Sans", sans-serif; font-weight: 700; fill: #ffd400; stroke: #ffd400; stroke-width: 1.500px; letter-spacing: 0; }
.vid { font-family: "Liberation Sans", sans-serif; font-weight: 700; font-style: italic; fill: var(--vid, #a5226b); stroke: var(--vid, #a5226b); stroke-width: 1.500px; letter-spacing: 0; }
.greylogo { --vid: #c4c4c4; --cloud: #444; }
.lg { font-size: 3.500px; fill: #444; font-family: "Liberation Sans", sans-serif; letter-spacing: 0; }
.lgb { font-weight: 700; }
.lgf { font-size: 5px; fill: #333; text-anchor: end; font-family: "Noto Sans", "DejaVu Sans", sans-serif; letter-spacing: 0; }
.lgw { font-size: 4.500px; letter-spacing: .55px; fill: #555; font-family: "Liberation Sans", sans-serif; }

.app { position: relative; width: 1280px; height: 992px; overflow: hidden; display: flex; flex-direction: column; background: #fff; }

.titlebar { height: 24px; display: flex; align-items: center; padding-left: 3px; flex: none; font-size: 12px; }
.appicon { flex: none; margin-top: -1px; }
.apptitle { margin-left: 4px; }
.winctl { margin-left: auto; margin-right: 3px; display: flex; align-self: flex-start; }
.wbtn { width: 45px; height: 20px; display: flex; align-items: center; justify-content: center; }

.menubar { height: 22px; flex: none; display: flex; gap: 19px; align-items: center; padding-left: 15px; font-size: 12px; border-bottom: 1px solid #f0f0f0; }

.workspace { flex: 1; min-height: 0; display: flex; }

.left { width: 287px; flex: none; display: flex; flex-direction: column; }
.ltabs { height: 30px; flex: none; display: flex; align-items: flex-end; border-bottom: 1px solid #d9d9d9; margin-right: 6px; }
.tab { display: flex; align-items: center; font-size: 11px; background: #fff; border: 1px solid #d9d9d9; border-bottom: 0; white-space: nowrap; }
.tab-tree { width: 113px; height: 29px; padding-left: 9px; margin-bottom: -1px; }
.tab-tree .tt { margin-left: 7px; }
.tab-tree .tx { margin-left: 12px; }
.leftbody { flex: 1; min-height: 0; margin-right: 6px; padding: 2px 3px 3px 4px; border: 1px solid #e2e2e2; border-top: 0; border-left: 0; }
.tree { position: relative; height: 890px; border: 1px solid #808890; padding-top: 1px; background: #fff; }
.guides { position: absolute; left: 0; top: 0; shape-rendering: crispEdges; }
.row { position: relative; height: 24px; display: flex; align-items: center; gap: 5px; white-space: nowrap; }
.l0 { padding-left: 31px; }
.l1 { padding-left: 59px; gap: 6px; }
.l2 { padding-left: 87px; }
.l3 { padding-left: 114px; }
.ti { width: 21px; height: 21px; margin-right: 1px; flex: none; }
.ti.wide { width: 24px; height: 14px; margin-right: 0; }
.exp { position: absolute; top: 8px; width: 9px; height: 9px; border: 1px solid #9a9a9a; background: linear-gradient(#fff, #dcdcdc); }
.exp::after { content: ""; position: absolute; left: 1px; right: 1px; top: 3px; height: 1px; background: #2a3a90; }
.l0 .exp { left: 12px; }
.l1 .exp { left: 39px; }
.l2 .exp { left: 66px; }

.right { flex: 1; min-width: 0; display: flex; flex-direction: column; padding-right: 1px; }
.rtabs { height: 30px; flex: none; display: flex; align-items: flex-end; padding-left: 1px; border-bottom: 1px solid #d9d9d9; }
.rtabs .tab { margin-bottom: -1px; }
.tab-cluster { width: 90px; height: 28px; padding-left: 5px; background: #f0f0f0; border-right: 0; }
.tab-cluster .tt { margin-left: 5px; }
.tab-cluster .tx { margin-left: 11px; }
.tab-version { width: 100px; height: 30px; padding-left: 7px; }
.tab-version .tt { margin-left: 6px; margin-top: -2px; }
.tab-version .tx { margin-left: 12px; margin-top: -2px; }

.panel { height: 895px; flex: none; border: 1px solid #d9d9d9; border-top: 0; padding: 0 4px 4px 3px; display: flex; flex-direction: column; }
.crumb { margin: 0; height: 32px; flex: none; padding: 10px 0 0 11px; font-size: 14px; line-height: 16px; font-weight: 400; color: #0a0aa8; letter-spacing: .1px; }
.subtab { width: 55px; height: 21px; flex: none; padding: 3px 0 0 6px; border: 1px solid #d9d9d9; border-bottom: 0; background: #fff; margin-bottom: -1px; position: relative; font-size: 11px; line-height: 14px; }
.page { flex: 1; min-height: 0; border: 1px solid #d9d9d9; display: flex; flex-direction: column; }
.toolbar { height: 31px; flex: none; display: flex; align-items: center; justify-content: flex-end; gap: 5px; padding: 2px 10px 0 0; font-size: 12px; }

.info { height: 95px; flex: none; margin: 0 4px 0 5px; border: 1px solid #7f8890; padding-top: 12px; display: grid; grid-template-columns: 129px 258px 1fr; grid-template-rows: 35px 35px; }
.smalllogo { grid-row: 1 / span 2; margin: -1px 0 0 29px; }
.field { display: flex; align-items: center; }
.f-owner { padding-top: 1px; }
.fk { flex: none; }
.k-ip { width: 30px; }
.k-owner { width: 70px; }
.v { display: block; flex: none; height: 12px; border-radius: 3px; background: #c8c8c8; filter: blur(3px); opacity: .85; }
.v-ip { width: 64px; }
.v-port { width: 14px; }

.scrollarea { flex: 1; min-height: 0; display: flex; padding-top: 1px; }
.cards { width: 961px; padding: 2px 0 0 8px; display: grid; grid-template-columns: repeat(6, 150px); grid-auto-rows: 230px; gap: 6px; align-content: start; flex: none; }
.scrollbar { width: 16px; height: 705px; display: flex; flex-direction: column; background: #f0f0f0; flex: none; }
.sa { height: 17px; display: flex; align-items: center; justify-content: center; flex: none; }
.thumb { flex: 1; background: #cdcdcd; }

.card { background: #d1ffd1; border: 1px solid #666; }
.card .v { background: #a5bda5; opacity: .6; }
.ci { height: 63px; padding: var(--it) 0 0 var(--il); }
.ci svg { display: block; overflow: visible; }
.cl { width: 150px; height: 22px; line-height: 22px; text-align: center; margin-left: calc(var(--lc) - 75px); margin-top: var(--ld, 0px); margin-bottom: calc(0px - var(--ld, 0px)); white-space: nowrap; }
.cr { height: 20px; display: flex; align-items: center; }
.cr1 { margin-top: 31px; padding-left: var(--k1); }
.cr2 { margin-top: 23px; padding-left: var(--k2); }
.low .cr1 { margin-top: 32px; }
.low .cr2 { margin-top: 22px; }
.cr1 .k { width: calc(var(--v1) - var(--k1)); }
.cr2 .k { width: calc(var(--v2) - var(--k2)); }
.cr1 .v { width: var(--w1); }
.cr2 .v { width: var(--w2); }

.c-users { --it: 13px; --il: 54px; --lc: 74px; --k1: 6px; --v1: 59px; --w1: 25px; --k2: 5px; --v2: 59px; --w2: 27px; }
.c-job { --it: 11px; --il: 56px; --lc: 77px; --k1: 6px; --v1: 62px; --w1: 27px; --k2: 5px; --v2: 60px; --w2: 25px; }
.c-usb { --it: 10px; --il: 57px; --lc: 77px; --k1: 6px; --v1: 63px; --w1: 25px; --k2: 5px; --v2: 66px; --w2: 24px; }
.c-vsw { --it: 21px; --il: 56px; --lc: 78px; --k1: 6px; --v1: 55px; --w1: 27px; --k2: 5px; --v2: 54px; --w2: 29px; }
.c-vm { --it: 13px; --il: 55px; --lc: 77px; --k1: 6px; --v1: 62px; --w1: 28px; --k2: 5px; --v2: 61px; --w2: 29px; }
.c-bak { --it: 12px; --il: 59px; --lc: 75px; --k1: 6px; --v1: 62px; --w1: 35px; --k2: 5px; --v2: 62px; --w2: 29px; }
.c-res { --it: 11px; --il: 60px; --lc: 78px; --k1: 9px; --v1: 66px; --w1: 25px; --k2: 8px; --v2: 67px; --w2: 25px; }
.c-arc { --it: 14px; --il: 56px; --lc: 78px; --k1: 10px; --v1: 67px; --w1: 25px; --k2: 9px; --v2: 68px; --w2: 24px; }
.c-mig { --it: 10px; --il: 54px; --lc: 73px; --k1: 9px; --v1: 67px; --w1: 25px; --k2: 8px; --v2: 67px; --w2: 25px; }
.c-tim { --it: 9px; --il: 53px; --lc: 72px; --k1: 9px; --v1: 67px; --w1: 30px; --k2: 8px; --v2: 67px; --w2: 25px; }
.c-mai { --it: 10px; --il: 55px; --lc: 71px; --k1: 6px; --v1: 63px; --w1: 30px; --k2: 5px; --v2: 63px; --w2: 25px; }
.c-lv { --it: 9px; --il: 54px; --lc: 77px; --k1: 6px; --v1: 63px; --w1: 31px; --k2: 5px; --v2: 63px; --w2: 26px; }
.c-vd { --it: 11px; --il: 57px; --lc: 74px; --k1: 5px; --v1: 63px; --w1: 30px; --k2: 5px; --v2: 64px; --w2: 25px; }
.c-mon { --it: 12px; --il: 54px; --lc: 76px; --k1: 6px; --v1: 59px; --w1: 30px; --k2: 5px; --v2: 58px; --w2: 25px; }
.c-net { --it: 10px; --il: 52px; --lc: 75px; --k1: 9px; --v1: 67px; --w1: 32px; --k2: 9px; --v2: 67px; --w2: 26px; --ld: 1px; }
.c-sb { --it: 20px; --il: 61px; --lc: 76px; --k1: 10px; --v1: 67px; --w1: 31px; --k2: 9px; --v2: 69px; --w2: 24px; --ld: 4px; }

.status { height: 20px; flex: none; display: flex; align-items: center; padding: 3px 0 0 2px; font-size: 12px; }
.st1 { margin-left: 3px; width: 50px; }
.v-s1 { width: 25px; }
.su { margin-left: 7px; }
.st2 { margin-left: 7px; width: 38px; }
.v-s2 { width: 23px; }

.biglogo { position: absolute; left: 1134px; top: 17px; background: #fff; }
```
